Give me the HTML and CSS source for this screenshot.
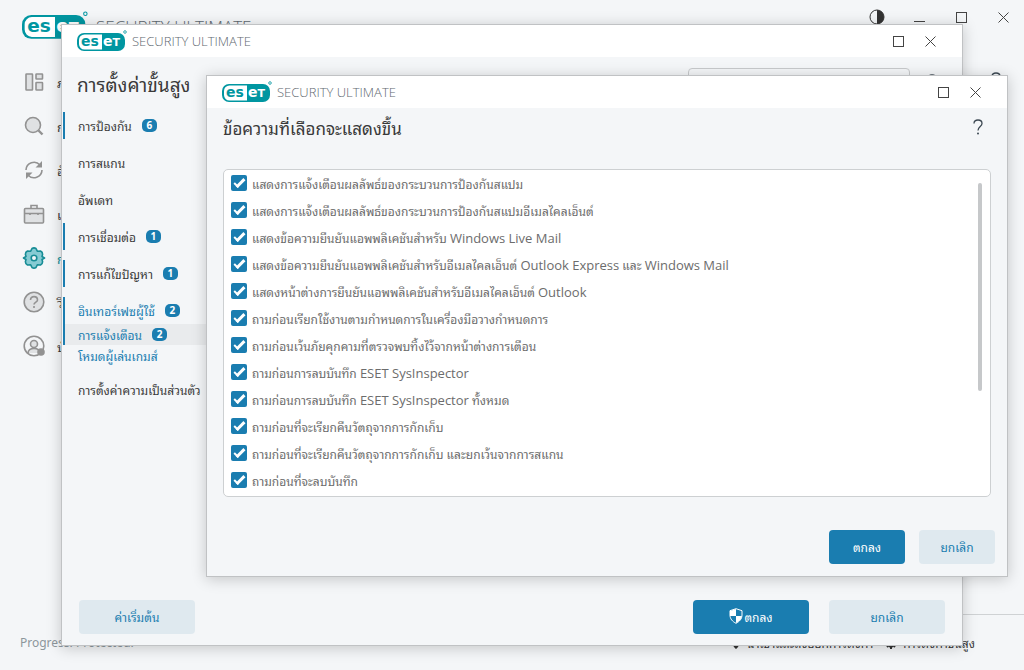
FILE: index.html
```html
<!DOCTYPE html>
<html lang="th">
<head>
    <meta charset="UTF-8">
    <title>ESET Security Ultimate</title>
    <link rel="stylesheet" href="styles.css">
</head>
<body>
    <svg class="defs" width="0" height="0" aria-hidden="true">
        <symbol id="logo" viewBox="0 0 50 21">
            <rect x="0" y="3" width="48" height="18" rx="7" fill="#0096a1"/>
            <path d="M25 4.500H7.500a5.500 5.500 0 0 0-5.500 5.500v4a5.500 5.500 0 0 0 5.500 5.500H25z" fill="#fff"/>
            <text x="4" y="16" class="logo-text" fill="#0096a1">es</text>
            <text x="26" y="16" class="logo-text" fill="#fff">e<tspan font-size="11">T</tspan></text>
            <circle cx="48" cy="2" r="1.300" fill="none" stroke="#0096a1" stroke-width="0.800"/>
        </symbol>
        <symbol id="maximize" viewBox="0 0 11 11">
            <rect x="0.500" y="0.500" width="10" height="10" fill="none" stroke="#444"/>
        </symbol>
        <symbol id="close" viewBox="0 0 11 11">
            <path d="M0.500 0.500l10 10M10.500 0.500l-10 10" fill="none" stroke="#444"/>
        </symbol>
        <symbol id="help" viewBox="0 0 10 16">
            <path d="M1 4.500C1 2 2.500 1 5 1s4 1.200 4 3.500C9 7.500 5 7.500 5 11.500" fill="none" stroke="#3c4852" stroke-width="1.300"/>
            <circle cx="5" cy="14.500" r="1" fill="#3c4852"/>
        </symbol>
    </svg>

    <div class="app">
        <header class="app-header">
            <div class="brand brand-large">
                <svg class="logo"><use href="#logo"/></svg>
                <span>SECURITY ULTIMATE</span>
            </div>
            <div class="window-buttons app-buttons">
                <button aria-label="Contrast"><svg class="contrast" viewBox="0 0 16 16"><circle cx="8" cy="8" r="7" fill="none" stroke="#333"/><path d="M8 1a7 7 0 0 1 0 14z" fill="#333"/></svg></button>
                <button aria-label="Minimize"><svg viewBox="0 0 11 11"><path d="M0 9.500h11" stroke="#444"/></svg></button>
                <button aria-label="Maximize"><svg><use href="#maximize"/></svg></button>
                <button aria-label="Close"><svg><use href="#close"/></svg></button>
            </div>
        </header>

        <div class="app-body">
            <nav class="app-nav">
                <a href="#"><svg viewBox="0 0 20 20"><rect x="2" y="2" width="6.500" height="16" rx="0.500"/><rect x="12" y="2" width="6.500" height="5" rx="0.500"/><rect x="12" y="10.500" width="6.500" height="7.500" rx="0.500"/></svg>ภาพรวม</a>
                <a href="#"><svg viewBox="0 0 20 20"><circle cx="9" cy="9" r="7.500"/><path d="M14.500 14.500l4 4" stroke-width="2.400"/></svg>การสแกน</a>
                <a href="#"><svg viewBox="0 0 20 20"><path class="line" d="M2 10a8 8 0 0 1 14-5M18 10a8 8 0 0 1-14 5"/><path class="solid" d="M18 1v6.500h-6.500zM2 19v-6.500h6.500z"/></svg>อัพเดท</a>
                <a href="#"><svg viewBox="0 0 20 20"><rect x="0.500" y="4.500" width="19" height="14.500" rx="1"/><path class="line" d="M7 4.500V1.500h6v3M1 9.500h18M6 9v2M14 9v2"/></svg>เครื่องมือ</a>
                <a href="#" class="active"><svg viewBox="0 0 20 20"><path d="M8 0.500Q10-0.800 12 0.500L13.300 3.200L16.500 3Q18.600 4 18.600 6.200L18 8.500L20.500 10L18 11.500L18.600 13.800Q18.600 16 16.500 17L13.300 16.800L12 19.500Q10 20.800 8 19.500L6.700 16.800L3.500 17Q1.400 16 1.400 13.800L2 11.500L-0.500 10L2 8.500L1.400 6.200Q1.400 4 3.500 3L6.700 3.200z" stroke-linejoin="round"/><circle class="hole" cx="10" cy="10" r="2.800"/></svg>การตั้งค่า</a>
                <a href="#"><svg viewBox="0 0 20 20"><circle cx="10" cy="10" r="9.800"/><path class="line" d="M6.500 8c0-4.500 7-4.500 7 0 0 2.200-3.500 2-3.500 4.500M10 14v2"/></svg>วิธีใช้</a>
                <a href="#"><svg viewBox="0 0 20 20"><circle class="line" cx="10" cy="10" r="9.800"/><circle cx="10" cy="8" r="3.500"/><path d="M4 17c0.500-6 11.500-6 12 0"/><circle class="solid" cx="17" cy="16" r="3.800"/></svg>บัญชี</a>
            </nav>
            <button class="help" aria-label="Help"><svg><use href="#help"/></svg></button>
        </div>

        <footer class="app-footer">
            <span class="slogan">Progress. Protected.</span>
            <div class="footer-links">
                <a href="#"><svg viewBox="0 0 12 12"><path d="M3 9V1M1 3l2-2 2 2M7 2v9M5 9l2 2 2-2" fill="none" stroke="#333" stroke-width="1.500"/></svg>นำเข้าและส่งออกการตั้งค่า</a>
                <a href="#"><svg viewBox="0 0 12 12"><circle cx="6" cy="6" r="3.500" fill="none" stroke="#333" stroke-width="2.500"/><path d="M6 0v2M6 10v2M0 6h2M10 6h2M2 2l1 1M9 9l1 1M10 2L9 3M3 9l-1 1" stroke="#333" stroke-width="2"/></svg>การตั้งค่าขั้นสูง</a>
            </div>
        </footer>
    </div>

    <section class="window settings">
        <header class="titlebar">
            <div class="brand">
                <svg class="logo"><use href="#logo"/></svg>
                <span>SECURITY ULTIMATE</span>
            </div>
            <div class="window-buttons">
                <button aria-label="Maximize"><svg><use href="#maximize"/></svg></button>
                <button aria-label="Close"><svg><use href="#close"/></svg></button>
            </div>
        </header>
        <div class="settings-top">
            <h1>การตั้งค่าขั้นสูง</h1>
            <div class="search">
                <svg viewBox="0 0 12 12"><circle cx="5" cy="5" r="4.500" fill="none" stroke="#555"/><path d="M8 8l4 4" stroke="#555"/></svg>
                <input type="text" aria-label="Search">
                <svg viewBox="0 0 12 12"><path d="M1 1l10 10M11 1L1 11" stroke="#888"/></svg>
            </div>
            <button class="help" aria-label="Help"><svg><use href="#help"/></svg></button>
        </div>
        <nav class="tree">
            <a href="#" class="marked">การป้องกัน <span class="badge">6</span></a>
            <a href="#">การสแกน</a>
            <a href="#">อัพเดท</a>
            <a href="#" class="marked">การเชื่อมต่อ <span class="badge">1</span></a>
            <a href="#" class="marked">การแก้ไขปัญหา <span class="badge">1</span></a>
            <div class="group">
                <a href="#" class="marked">อินเทอร์เฟซผู้ใช้ <span class="badge">2</span></a>
                <a href="#" class="sub marked selected">การแจ้งเตือน <span class="badge">2</span></a>
                <a href="#" class="sub">โหมดผู้เล่นเกมส์</a>
            </div>
            <a href="#">การตั้งค่าความเป็นส่วนตัว</a>
        </nav>
        <footer class="actions settings-actions">
            <button class="btn default">ค่าเริ่มต้น</button>
            <button class="btn primary"><svg viewBox="0 0 14 16"><path d="M7 0.700l6 2V7c0 4-2.500 6.500-6 8.300C3.500 13.500 1 11 1 7V2.700z" fill="none" stroke="#fff"/><path d="M7 1v7H1V3zM7 8h6c-0.500 3.500-3 5.500-6 7z" fill="#fff"/></svg>ตกลง</button>
            <button class="btn">ยกเลิก</button>
        </footer>
    </section>

    <section class="window messages">
        <header class="titlebar">
            <div class="brand">
                <svg class="logo"><use href="#logo"/></svg>
                <span>SECURITY ULTIMATE</span>
            </div>
            <div class="window-buttons">
                <button aria-label="Maximize"><svg><use href="#maximize"/></svg></button>
                <button aria-label="Close"><svg><use href="#close"/></svg></button>
            </div>
        </header>
        <div class="messages-top">
            <h2>ข้อความที่เลือกจะแสดงขึ้น</h2>
            <button class="help" aria-label="Help"><svg><use href="#help"/></svg></button>
        </div>
        <div class="list">
            <div class="rows">
                <label><input type="checkbox" checked><span>แสดงการแจ้งเตือนผลลัพธ์ของกระบวนการป้องกันสแปม</span></label>
                <label><input type="checkbox" checked><span>แสดงการแจ้งเตือนผลลัพธ์ของกระบวนการป้องกันสแปมอีเมลไคลเอ็นต์</span></label>
                <label><input type="checkbox" checked><span>แสดงข้อความยืนยันแอพพลิเคชันสำหรับ <span lang="en">Windows Live Mail</span></span></label>
                <label><input type="checkbox" checked><span>แสดงข้อความยืนยันแอพพลิเคชันสำหรับอีเมลไคลเอ็นต์ <span lang="en">Outlook Express</span> และ <span lang="en">Windows Mail</span></span></label>
                <label><input type="checkbox" checked><span>แสดงหน้าต่างการยืนยันแอพพลิเคชันสำหรับอีเมลไคลเอ็นต์ <span lang="en">Outlook</span></span></label>
                <label><input type="checkbox" checked><span>ถามก่อนเรียกใช้งานตามกำหนดการในเครื่องมือวางกำหนดการ</span></label>
                <label><input type="checkbox" checked><span>ถามก่อนเว้นภัยคุกคามที่ตรวจพบทิ้งไว้จากหน้าต่างการเตือน</span></label>
                <label><input type="checkbox" checked><span>ถามก่อนการลบบันทึก <span lang="en">ESET SysInspector</span></span></label>
                <label><input type="checkbox" checked><span>ถามก่อนการลบบันทึก <span lang="en">ESET SysInspector</span> ทั้งหมด</span></label>
                <label><input type="checkbox" checked><span>ถามก่อนที่จะเรียกคืนวัตถุจากการกักเก็บ</span></label>
                <label><input type="checkbox" checked><span>ถามก่อนที่จะเรียกคืนวัตถุจากการกักเก็บ และยกเว้นจากการสแกน</span></label>
                <label><input type="checkbox" checked><span>ถามก่อนที่จะลบบันทึก</span></label>
            </div>
            <div class="scrollbar"><div class="thumb"></div></div>
        </div>
        <footer class="actions messages-actions">
            <button class="btn primary">ตกลง</button>
            <button class="btn">ยกเลิก</button>
        </footer>
    </section>
</body>
</html>
```
FILE: styles.css
```css
* {
    box-sizing: border-box;
}
body {
    margin: 0;
    height: 100vh;
    overflow: hidden;
    background: #f4f6f8;
    color: #3a3a3a;
    font-family: "Noto Sans", "Noto Sans Thai Looped", "Noto Looped Thai", "Loma", sans-serif;
    font-size: 12px;
}
.defs {
    position: absolute;
}
button {
    font: inherit;
    border: none;
    background: none;
    padding: 0;
    cursor: pointer;
}
a {
    color: inherit;
    text-decoration: none;
    white-space: nowrap;
}
svg {
    display: block;
    flex: none;
}
h1, h2 {
    margin: 0;
    font-weight: normal;
    white-space: nowrap;
}

/* brand */
.brand {
    display: flex;
    align-items: center;
    gap: 5px;
    color: #5f6970;
    font-size: 13px;
    font-family: "Open Sans", sans-serif;
    font-weight: 300;
}
.logo {
    width: 50px;
    height: 21px;
    margin-top: -2px;
}
.logo-text {
    font-family: "DejaVu Sans", sans-serif;
    font-size: 14px;
    font-weight: bold;
}
.brand-large {
    font-size: 17px;
    gap: 8px;
}
.brand-large .logo {
    width: 66px;
    height: 28px;
}

/* main window */
.app {
    display: flex;
    flex-direction: column;
    height: 100%;
}
.app-header {
    display: flex;
    justify-content: space-between;
    align-items: flex-start;
    height: 60px;
    padding: 13px 15px 0 22px;
}
.window-buttons {
    display: flex;
    gap: 21px;
}
.window-buttons svg {
    width: 11px;
    height: 11px;
}
.app-buttons {
    align-items: center;
    gap: 31px;
    margin-top: -4px;
}
.window-buttons .contrast {
    width: 16px;
    height: 16px;
    margin-right: -2px;
}
.app-body {
    flex: 1;
    display: flex;
    justify-content: space-between;
    align-items: flex-start;
    padding-right: 23px;
}
.app-nav a {
    display: flex;
    align-items: center;
    gap: 13px;
    height: 44px;
    padding-left: 24px;
    font-size: 13px;
}
.app-nav svg {
    width: 20px;
    height: 20px;
    overflow: visible;
    fill: #dfe1e3;
    stroke: #929292;
    stroke-width: 1.6;
}
.app-nav .line {
    fill: none;
}
.app-nav .solid {
    fill: #929292;
    stroke: none;
}
.app-nav .active {
    color: #0e8f98;
}
.app-nav .active svg {
    fill: #86cbd3;
    stroke: #178c95;
}
.app-nav .hole {
    fill: #f4f6f8;
}
.help svg {
    width: 10px;
    height: 16px;
}
.app-body .help {
    margin-top: 12px;
}
.app-footer {
    display: flex;
    align-items: center;
    height: 56px;
    padding-left: 20px;
}
.footer-links {
    flex: 1;
    display: flex;
    align-items: center;
    justify-content: flex-end;
    gap: 12px;
    height: 56px;
    padding-right: 49px;
    border-top: 1px solid #cfd2d4;
}
.footer-links a {
    display: flex;
    align-items: center;
    gap: 6px;
}
.footer-links svg {
    width: 12px;
    height: 12px;
}
.slogan {
    color: #8d969c;
}

/* stacked windows */
.window {
    position: absolute;
    display: flex;
    flex-direction: column;
    background: #f4f6f8;
    border: 1px solid #c0c2c4;
    box-shadow: 0 2px 14px rgba(0, 0, 0, 0.2);
}
.settings {
    inset: 24px 61px 24px 61px;
}
.messages {
    inset: 75px 16px 93px 206px;
}
.titlebar {
    display: flex;
    justify-content: space-between;
    align-items: center;
    flex: none;
    height: 32px;
    padding: 0 26px 0 15px;
    background: #fff;
}
.settings-top {
    display: flex;
    align-items: flex-start;
    padding: 11px 25px 0 15px;
}
h1 {
    margin-right: auto;
    font-size: 19px;
    line-height: 34px;
}
.search {
    display: flex;
    align-items: center;
    gap: 6px;
    width: 222px;
    height: 26px;
    padding: 0 7px;
    border: 1px solid #c8cacc;
    border-radius: 4px;
}
.search svg {
    width: 12px;
    height: 12px;
}
.search input {
    flex: 1;
    min-width: 0;
    border: none;
    background: none;
    outline: none;
}
.settings-top .help {
    margin: 6px 0 0 17px;
}
.tree {
    flex: 1;
    padding-top: 10px;
}
.tree a {
    display: flex;
    align-items: center;
    gap: 10px;
    height: 27px;
    margin: 0 0 10px 1px;
    padding-left: 13px;
    border-left: 2px solid transparent;
}
.tree .marked {
    border-color: #1a7db0;
}
.badge {
    width: 15px;
    border-radius: 5px;
    background: #1a7db0;
    color: #fff;
    font-size: 10px;
    font-weight: bold;
    line-height: 13px;
    text-align: center;
}
.group {
    padding-bottom: 10px;
    color: #1a7db0;
}
.group a {
    margin-bottom: 0;
}
.tree .sub {
    height: 21px;
}
.tree .selected {
    background: #e9ebed;
}
.actions {
    display: flex;
    flex: none;
}
.settings-actions {
    gap: 20px;
    padding: 0 17px 11px;
}
.messages-actions {
    justify-content: flex-end;
    gap: 14px;
    padding: 33px 12px 12px;
}
.btn {
    display: flex;
    align-items: center;
    justify-content: center;
    gap: 1px;
    width: 76px;
    height: 34px;
    padding-bottom: 2px;
    border-radius: 4px;
    background: #dfe9ef;
    color: #1a7db0;
}
.btn svg {
    width: 14px;
    height: 16px;
}
.settings-actions .btn {
    width: 116px;
}
.default {
    margin-right: auto;
}
.primary {
    background: #1a7db0;
    color: #fff;
}

/* message list */
.messages-top {
    display: flex;
    justify-content: space-between;
    align-items: flex-start;
    height: 61px;
    padding: 11px 24px 0 16px;
}
h2 {
    font-size: 17px;
    line-height: 20px;
}
.list {
    flex: 1;
    display: flex;
    justify-content: space-between;
    min-height: 0;
    margin: 0 16px;
    padding: 0 8px 0 7px;
    overflow: hidden;
    background: #fff;
    border: 1px solid #cdd0d2;
    border-radius: 5px;
}
.rows label {
    display: flex;
    align-items: flex-start;
    gap: 5px;
    height: 27px;
    padding-top: 5px;
    color: #6c6c6c;
    line-height: 20px;
    white-space: nowrap;
}
.rows [lang="en"] {
    font-family: "Open Sans", sans-serif;
    font-size: 13px;
    line-height: 1;
}
.rows input {
    appearance: none;
    display: flex;
    justify-content: center;
    flex: none;
    width: 16px;
    height: 16px;
    margin: 0;
    padding-top: 4px;
    border-radius: 2px;
    background: #1a7db0;
}
.rows input:checked::before {
    content: "";
    box-sizing: border-box;
    width: 11px;
    height: 6px;
    border-left: 2px solid #fff;
    border-bottom: 3px solid #fff;
    transform: rotate(-45deg);
}
.scrollbar {
    padding: 13px 0;
}
.thumb {
    width: 4px;
    height: 208px;
    border-radius: 2px;
    background: #c6c8ca;
}
```
